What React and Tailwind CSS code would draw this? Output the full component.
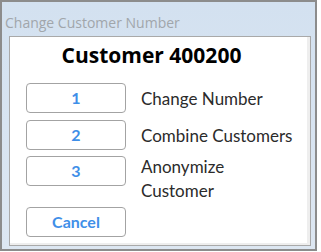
// Change Customer Number — small Access-style dialog
const options = [
  { num: '1', label: ['Change Number'] },
  { num: '2', label: ['Combine Customers'] },
  { num: '3', label: ['Anonymize', 'Customer'] },
];

function OptionButton({ children }) {
  return (
    <button className="w-[100px] h-[30px] shrink-0 rounded-[4px] border border-[#a3a3a3] bg-white text-[16px] font-bold text-[#3f8fe8] leading-none">
      {children}
    </button>
  );
}

export default function App() {
  return (
    <div className="w-[321px] h-[252px] bg-white" style={{ fontFamily: 'Lato, "Open Sans", sans-serif' }}>
      <div className="w-[317px] h-[251px] border-2 border-[#8c8c8c] bg-gradient-to-b from-[#d3e1f0] to-[#dde7f2] flex flex-col">
        {/* Title bar */}
        <div className="h-[34px] shrink-0 pl-[3px] pt-[8px]">
          <span className="text-[14px] text-[#a1a6ab] leading-[20px]" style={{ fontFamily: '"Open Sans", sans-serif' }}>
            Change Customer Number
          </span>
        </div>

        {/* Form body */}
        <div className="flex-1 ml-[7px] mr-[4px] mb-[3px] border border-[#a9a9a9] bg-white">
          <div className="h-full border-r-[3px] border-b-[2px] border-[#eeeeee] pl-[16px] pt-[6px]">
            <h1 className="pr-[30px] text-center text-[21px] font-bold text-black leading-[24px]" style={{ fontFamily: '"Open Sans", sans-serif' }}>
              Customer 400200
            </h1>

            <div className="mt-[16px] flex flex-col">
              {options.map((opt, i) => (
                <div key={opt.num} className={`flex items-start gap-[15px] ${i === 1 ? 'mt-[7px]' : i === 2 ? 'mt-[6px]' : ''}`}>
                  <OptionButton>{opt.num}</OptionButton>
                  <div className={`text-[17px] text-[#2b2b2b] ${opt.label.length > 1 ? 'leading-[24px] -mt-[1px]' : 'leading-[23px] pt-[4px]'}`}>
                    {opt.label.map((l) => (
                      <div key={l}>{l}</div>
                    ))}
                  </div>
                </div>
              ))}
              <div className="mt-[4px]">
                <OptionButton>Cancel</OptionButton>
              </div>
            </div>
          </div>
        </div>
      </div>
    </div>
  );
}
